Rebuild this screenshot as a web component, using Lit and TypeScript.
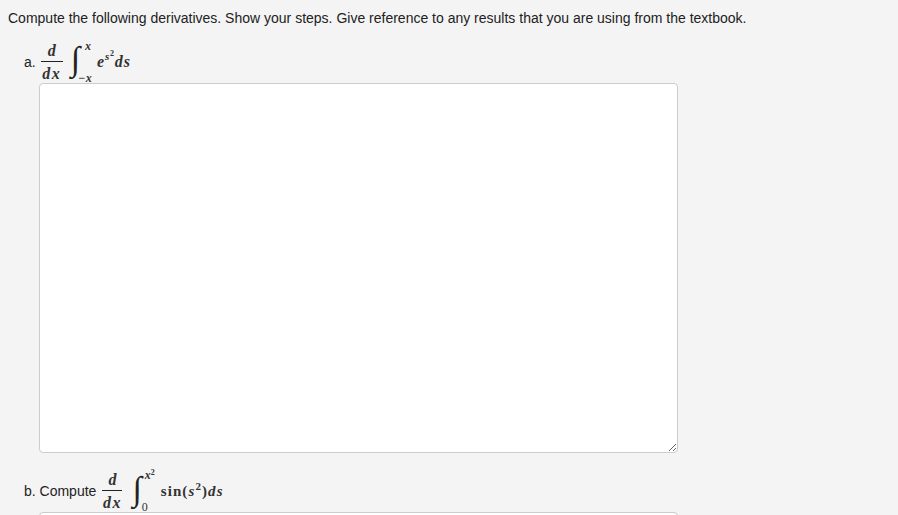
import { LitElement, html, css } from 'lit';
import { customElement } from 'lit/decorators.js';

@customElement('app-root')
export class AppRoot extends LitElement {
  private _frac() {
    return html`<span class="frac"><span class="num">d</span><span class="den">dx</span></span>`;
  }

  render() {
    return html`
      <div class="page">
        <p class="intro">Compute the following derivatives. Show your steps. Give reference to any results that you are using from the textbook.</p>

        <div class="q qa">
          <span class="label">a.</span>
          <span class="math">
            ${this._frac()}
            <span class="int">
              <span class="sign">∫</span>
              <span class="limits"><span class="up">x</span><span class="lo">−x</span></span>
            </span>
            <span class="body">e<sup class="sup"><i>s</i><sup class="sup2">2</sup></sup><span class="ds">ds</span></span>
          </span>
        </div>
        <textarea class="answer first"></textarea>

        <div class="q qb">
          <span class="label">b. Compute</span>
          <span class="math">
            ${this._frac()}
            <span class="int">
              <span class="sign">∫</span>
              <span class="limits wide"><span class="up">x<sup class="sup2">2</sup></span><span class="lo zero">0</span></span>
            </span>
            <span class="body upright">sin(<i>s</i><sup class="sq">2</sup>)<i>ds</i></span>
          </span>
        </div>
        <textarea class="answer"></textarea>
      </div>
    `;
  }

  static styles = css`
    :host {
      display: block;
      height: 515px;
      overflow: hidden;
      background: #f4f4f4;
    }
    .page {
      padding: 10px 8px 0;
      font-family: 'Liberation Sans', Arial, sans-serif;
      font-size: 14px;
      color: #222;
    }
    .intro {
      margin: 0;
      line-height: 16px;
    }
    .q {
      display: flex;
      align-items: center;
      box-sizing: border-box;
      height: 57px;
      padding: 14px 0 0 16px;
    }
    .qb {
      height: 59px;
      padding-top: 17px;
    }
    .label {
      margin-right: 5px;
    }
    .qb .label {
      margin-right: 6px;
    }
    .math {
      display: inline-flex;
      align-items: center;
      font-family: 'Liberation Serif', 'DejaVu Serif', serif;
      font-style: italic;
      font-weight: bold;
      color: #333;
    }
    .frac {
      display: inline-flex;
      flex-direction: column;
      align-items: center;
      width: 22px;
      font-size: 16px;
      line-height: 17px;
    }
    .qb .frac {
      width: 20px;
    }
    .num {
      width: 100%;
      text-align: center;
      border-bottom: 1px solid #222;
      padding-bottom: 2px;
    }
    .den {
      padding-top: 3px;
      letter-spacing: 1.5px;
    }
    .int {
      display: inline-flex;
      align-items: center;
      margin-left: 8px;
    }
    .qb .int {
      margin-left: 10px;
    }
    .sign {
      font-family: 'Liberation Serif', serif;
      font-style: normal;
      font-weight: normal;
      font-size: 34px;
      line-height: 44px;
      margin-bottom: 5px;
      color: #222;
    }
    .limits {
      display: flex;
      flex-direction: column;
      justify-content: space-between;
      width: 17px;
      height: 44px;
      font-size: 12px;
      line-height: 12px;
    }
    .limits.wide {
      width: 19px;
    }
    .up {
      padding-left: 5px;
    }
    .wide .up {
      padding-left: 3px;
    }
    .lo {
      margin-left: -2px;
      letter-spacing: 0.5px;
    }
    .zero {
      margin-left: 0;
      font-style: normal;
      font-weight: normal;
      font-size: 12px;
    }
    .body {
      font-size: 16px;
      line-height: 16px;
      letter-spacing: 0.8px;
    }
    .upright {
      font-style: normal;
      font-size: 15px;
      letter-spacing: 1.1px;
    }
    .sup {
      font-size: 11px;
      line-height: 0;
      vertical-align: 7px;
    }
    .sup2 {
      font-size: 8px;
      font-style: normal;
      line-height: 0;
      vertical-align: 4px;
    }
    .sq {
      font-size: 11px;
      line-height: 0;
      vertical-align: 6px;
    }
    .ds {
      margin-left: 0;
    }
    .answer {
      display: block;
      box-sizing: border-box;
      width: 639px;
      height: 370px;
      margin: 0 0 0 31px;
      padding: 6px 8px;
      background: #fff;
      border: 1px solid #ccc;
      border-radius: 4px;
      outline: none;
    }
  `;
}
